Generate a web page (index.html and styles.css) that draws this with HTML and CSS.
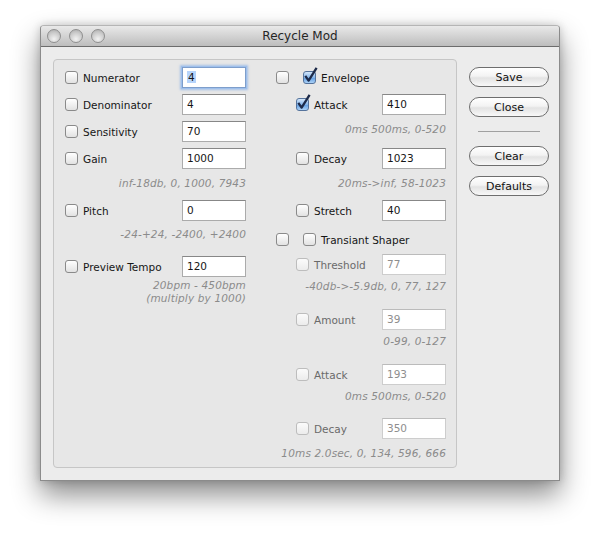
FILE: index.html
```html
<!DOCTYPE html>
<html lang="en">
<head>
  <meta charset="UTF-8">
  <title>Recycle Mod</title>
  <link rel="stylesheet" href="styles.css">
</head>
<body>
  <div class="page">
    <div class="window">
      <div class="titlebar">
        <div class="lights"><span class="light"></span><span class="light"></span><span class="light"></span></div>
        <div class="title">Recycle Mod</div>
        <div></div>
      </div>

      <div class="content">
        <div class="group">
          <!-- colonna sinistra -->
          <div class="col left-col">
            <div class="row"><label class="opt"><span class="box"></span>Numerator</label><div class="field focus"><span class="sel">4</span></div></div>
            <div class="row"><label class="opt"><span class="box"></span>Denominator</label><div class="field">4</div></div>
            <div class="row"><label class="opt"><span class="box"></span>Sensitivity</label><div class="field">70</div></div>
            <div class="row"><label class="opt"><span class="box"></span>Gain</label><div class="field">1000</div></div>
            <div class="hint">inf-18db, 0, 1000, 7943</div>
            <div class="row after-hint"><label class="opt"><span class="box"></span>Pitch</label><div class="field">0</div></div>
            <div class="hint mid">-24-+24, -2400, +2400</div>
            <div class="row loose"><label class="opt"><span class="box"></span>Preview Tempo</label><div class="field">120</div></div>
            <div class="hint tight">20bpm - 450bpm<br>(multiply by 1000)</div>
          </div>

          <!-- colonna destra -->
          <div class="col right-col">
            <div class="row head">
              <span class="box"></span>
              <label class="opt"><span class="box on"><svg width="16" height="16" viewBox="0 0 16 16"><path d="M2.3 8.8 L5.6 13.6 L13.6 0.8" fill="none" stroke="#1d2b4a" stroke-width="2.3" stroke-linejoin="round"/></svg></span>Envelope</label>
            </div>
            <div class="row sub"><label class="opt"><span class="box on"><svg width="16" height="16" viewBox="0 0 16 16"><path d="M2.3 8.8 L5.6 13.6 L13.6 0.8" fill="none" stroke="#1d2b4a" stroke-width="2.3" stroke-linejoin="round"/></svg></span>Attack</label><div class="field">410</div></div>
            <div class="hint">0ms 500ms, 0-520</div>
            <div class="row sub after-hint wide"><label class="opt"><span class="box"></span>Decay</label><div class="field">1023</div></div>
            <div class="hint">20ms-&gt;inf, 58-1023</div>
            <div class="row sub after-hint"><label class="opt"><span class="box"></span>Stretch</label><div class="field">40</div></div>
            <div class="row head shaper">
              <span class="box"></span>
              <label class="opt"><span class="box"></span>Transiant Shaper</label>
            </div>
            <div class="row sub dim"><label class="opt"><span class="box"></span>Threshold</label><div class="field">77</div></div>
            <div class="hint close">-40db-&gt;-5.9db, 0, 77, 127</div>
            <div class="row sub dim loose"><label class="opt"><span class="box"></span>Amount</label><div class="field">39</div></div>
            <div class="hint close">0-99, 0-127</div>
            <div class="row sub dim loose"><label class="opt"><span class="box"></span>Attack</label><div class="field">193</div></div>
            <div class="hint close">0ms 500ms, 0-520</div>
            <div class="row sub dim last"><label class="opt"><span class="box"></span>Decay</label><div class="field">350</div></div>
            <div class="hint">10ms 2.0sec, 0, 134, 596, 666</div>
          </div>
        </div>

        <div class="side">
          <button class="btn">Save</button>
          <button class="btn">Close</button>
          <div class="sep"></div>
          <button class="btn">Clear</button>
          <button class="btn">Defaults</button>
        </div>
      </div>
    </div>
  </div>
</body>
</html>
```

FILE: styles.css
```css
body {
  margin: 0;
  background: #fff;
  font-family: "DejaVu Sans", sans-serif;
  font-size: 10.5px;
  color: #161616;
}

.page {
  padding: 25px 0 60px 40px;
}

.window {
  width: 520px;
  height: 456px;
  box-sizing: border-box;
  border: 1px solid #8b8b8b;
  border-top-color: #b5b5b5;
  border-radius: 4px 4px 0 0;
  background: #ececec;
  box-shadow: 0 14px 28px rgba(0, 0, 0, 0.45), 0 0 8px rgba(0, 0, 0, 0.18);
  display: flex;
  flex-direction: column;
}

.titlebar {
  height: 21px;
  box-sizing: border-box;
  border-bottom: 1px solid #6c6c6c;
  border-radius: 3px 3px 0 0;
  background: linear-gradient(#e9e9e9, #bdbdbd);
  display: grid;
  grid-template-columns: 1fr auto 1fr;
  align-items: center;
}

.lights {
  display: flex;
  gap: 8px;
  padding-left: 6px;
}

.light {
  width: 14px;
  height: 14px;
  box-sizing: border-box;
  border-radius: 50%;
  border: 1px solid #8f8f8f;
  background: radial-gradient(circle at 50% 75%, #f2f2f2 0, #cdcdcd 55%, #a9a9a9 100%);
}

.title {
  font-size: 12px;
  color: #262626;
}

.content {
  display: flex;
  padding: 12px 10px 0 12px;
}

.group {
  width: 404px;
  height: 409px;
  box-sizing: border-box;
  border: 1px solid #c6c6c6;
  border-radius: 4px;
  background: #e7e7e7;
  display: flex;
  gap: 30px;
  padding: 7px 10px 0 11px;
}

.col {
  display: flex;
  flex-direction: column;
}

.left-col {
  width: 181px;
}

.right-col {
  width: 170px;
}

.row {
  display: flex;
  align-items: center;
  height: 21px;
  flex-shrink: 0;
}

.row + .row {
  margin-top: 6px;
}

.row.after-hint {
  margin-top: 10px;
}

.row.wide {
  margin-top: 12px;
}

.row.loose {
  margin-top: 15px;
}

.row.shaper {
  margin-top: 8px;
}

.row.sub {
  padding-left: 20px;
}

.row.shaper + .row.dim {
  margin-top: 4px;
}

.row.dim.loose {
  margin-top: 16px;
}

.row.dim.last {
  margin-top: 15px;
}

.head .box + .opt {
  margin-left: 14px;
}

.opt {
  display: flex;
  align-items: center;
  gap: 5px;
}

.box {
  width: 13px;
  height: 13px;
  box-sizing: border-box;
  border: 1px solid #8a8a8a;
  border-radius: 3px;
  background: linear-gradient(#fff, #e2e2e2);
  position: relative;
  flex-shrink: 0;
}

.box svg {
  position: absolute;
  left: -1px;
  top: -5px;
  overflow: visible;
}

.box.on {
  border-color: #55739c;
  background: linear-gradient(#d4e7fb, #86b6ea 50%, #64a0e3 55%, #acd2f7);
}

.field {
  margin-left: auto;
  width: 64px;
  height: 21px;
  box-sizing: border-box;
  border: 1px solid #ababab;
  border-top-color: #878787;
  background: #fff;
  padding-left: 4px;
  line-height: 19px;
}

.field.focus {
  border-color: #7e9ecb;
  box-shadow: 0 0 0 1px #9fc0ec, 0 0 2px 2px rgba(110, 160, 230, 0.55);
}

.sel {
  background: #b6d4fb;
  padding: 0 1px;
}

.dim .opt {
  color: #6a6a6a;
}

.dim .box {
  border-color: #bdbdbd;
  background: linear-gradient(#fbfbfb, #ececec);
}

.dim .field {
  color: #8e8e8e;
  border-color: #cdcdcd;
  border-top-color: #bbbbbb;
}

.hint {
  margin-top: 7px;
  text-align: right;
  font-style: italic;
  color: #8b8b8b;
  line-height: 14px;
  letter-spacing: 0.15px;
}

.hint.close {
  margin-top: 4px;
}

.hint.mid {
  margin-top: 6px;
}

.hint.tight {
  margin-top: 2px;
  line-height: 13px;
}

.side {
  display: flex;
  flex-direction: column;
  gap: 10px;
  width: 81px;
  margin-left: 12px;
  padding-top: 8px;
}

.btn {
  height: 20px;
  box-sizing: border-box;
  border: 1px solid #6e6e6e;
  border-radius: 10px;
  background: linear-gradient(#ffffff, #f3f3f3 45%, #e3e3e3 55%, #f8f8f8);
  font-family: "DejaVu Sans", sans-serif;
  font-size: 11px;
  color: #111;
  padding: 0;
}

.sep {
  height: 1px;
  width: 62px;
  margin: 4px auto;
  background: #a0a0a0;
}
```
